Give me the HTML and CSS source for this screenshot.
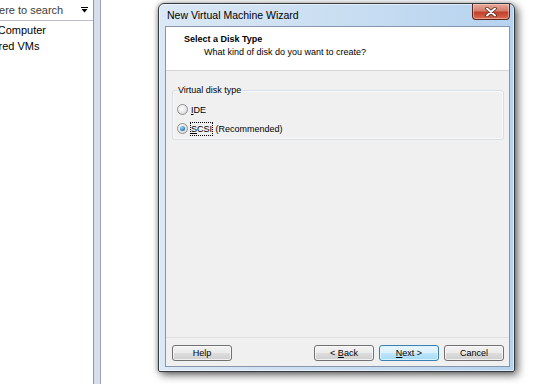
FILE: index.html
```html
<!DOCTYPE html>
<html lang="en">
<head>
  <meta charset="UTF-8" />
  <title>New Virtual Machine Wizard</title>
  <link rel="stylesheet" href="styles.css">
</head>
<body>
<div class="desktop">
  <aside class="sidebar">
    <div class="search">
      <span class="search-text">Type here to search</span>
      <svg class="search-arrow" width="7" height="6" viewBox="0 0 7 6"><path d="M0 0.5H7" stroke="#000"/><path d="M0.5 2H6.5L3.5 5.5Z" fill="#000"/></svg>
    </div>
    <ul class="tree">
      <li class="tree-item computer">My Computer</li>
      <li class="tree-item shared">Shared VMs</li>
    </ul>
  </aside>
  <div class="splitter"></div>
  <main class="workspace">
    <div class="window">
      <div class="titlebar">
        <span class="title">New Virtual Machine Wizard</span>
        <button class="close" title="Close">
          <svg width="12" height="10" viewBox="0 0 12 10">
            <path d="M2 1.5L10 8.5M10 1.5L2 8.5" stroke="#4a1d16" stroke-width="3.4" stroke-linecap="round"/>
            <path d="M2 1.5L10 8.5M10 1.5L2 8.5" stroke="#fff" stroke-width="2" stroke-linecap="round"/>
          </svg>
        </button>
      </div>
      <div class="client">
        <div class="header">
          <div class="header-title">Select a Disk Type</div>
          <div class="header-sub">What kind of disk do you want to create?</div>
        </div>
        <div class="content">
          <fieldset class="group">
            <legend>Virtual disk type</legend>
            <label class="radio"><span class="radio-dot"></span><span class="radio-text"><u>I</u>DE</span></label>
            <label class="radio"><span class="radio-dot checked"></span><span class="radio-text focus"><u>S</u>CSI</span>&nbsp;(Recommended)</label>
          </fieldset>
        </div>
        <div class="footer">
          <button class="btn btn-help">Help</button>
          <button class="btn">&lt; <u>B</u>ack</button>
          <button class="btn btn-default"><u>N</u>ext &gt;</button>
          <button class="btn">Cancel</button>
        </div>
      </div>
    </div>
  </main>
</div>
</body>
</html>
```

FILE: styles.css
```css
* { margin: 0; padding: 0; box-sizing: border-box; }
body {
  width: 558px;
  height: 384px;
  overflow: hidden;
  background: #fff;
  font-family: "Liberation Sans", Arial, sans-serif;
  color: #000;
}
.desktop { display: flex; height: 384px; }

/* left library pane, scrolled a bit to the right */
.sidebar {
  width: 93px;
  flex: none;
  overflow: hidden;
  font-size: 11px;
  white-space: nowrap;
}
.search {
  height: 21px;
  border-bottom: 1px solid #b9c0cb;
  display: flex;
  align-items: center;
  justify-content: space-between;
  padding-right: 5px;
}
.search-text { margin-left: -34px; color: #3c3c3c; }
.search-arrow { flex: none; }
.tree { list-style: none; padding-top: 1px; }
.tree-item { height: 16px; line-height: 16px; }
.tree-item.computer { margin-left: -20px; }
.tree-item.shared { margin-left: -21px; }

.splitter {
  width: 8px;
  flex: none;
  background: #d6ddef;
  border-left: 1px solid #8f96a3;
  border-right: 1px solid #9ba2ae;
}

.workspace { flex: 1; padding: 3px 0 0 57px; }

/* wizard window */
.window {
  width: 357px;
  height: 369px;
  display: flex;
  flex-direction: column;
  padding: 0 4px 4px 6px;
  border: 1px solid #363b42;
  border-radius: 6px 6px 2px 2px;
  background: linear-gradient(to right, #dbe8f5, #c6dcf1 60%, #b5d2ef);
  box-shadow: inset 0 0 0 1px rgba(255,255,255,0.55), 3px 3px 8px rgba(0,0,0,0.6), -1px 0 4px rgba(0,0,0,0.25);
}
.titlebar {
  height: 22px;
  flex: none;
  display: flex;
  justify-content: space-between;
  align-items: flex-start;
}
.title { font-size: 10.5px; line-height: 22px; padding-left: 2px; color: #000; }
.close {
  width: 38px;
  height: 16px;
  border: 1px solid #5b2219;
  border-top: none;
  border-radius: 0 0 4px 4px;
  background: linear-gradient(to bottom, #e9a99b, #d47f6e 45%, #c0402c 55%, #d86a4f);
  box-shadow: inset 0 0 0 1px rgba(255,220,210,0.5);
  display: flex;
  align-items: center;
  justify-content: center;
}

.client {
  flex: 1;
  display: flex;
  flex-direction: column;
  border: 1px solid #8596ad;
  background: #f0f0f0;
  font-size: 9px;
}
.header {
  height: 44px;
  flex: none;
  background: #fff;
  border-bottom: 1px solid #d5d5d5;
  padding: 6px 0 0 18px;
}
.header-title { font-weight: bold; line-height: 12px; }
.header-sub { line-height: 12px; margin-top: 1px; padding-left: 20px; }

.content { flex: 1; padding: 13px 5px 0 6px; }
.group {
  border: 1px solid #d5dfe5;
  border-radius: 3px;
  padding: 0 0 1px 4px;
  box-shadow: 0 0 0 1px rgba(255,255,255,0.6) inset;
}
.group legend { line-height: 12px; padding: 0 1px; }
.group > legend + .radio { margin-top: 4px; }
.radio { display: flex; align-items: center; height: 19px; }
.radio-dot {
  width: 11px;
  height: 11px;
  border-radius: 50%;
  border: 1px solid #8e8f8f;
  background: radial-gradient(circle at 40% 35%, #fff, #e4e4e4 60%, #cfcfcf);
  margin-right: 2px;
  display: flex;
  align-items: center;
  justify-content: center;
}
.radio-dot.checked::after {
  content: "";
  width: 5px;
  height: 5px;
  border-radius: 50%;
  background: radial-gradient(circle at 40% 35%, #a8e0fb, #2a7dc0 60%, #15508a);
}
.radio-text { padding: 1px 0; line-height: 10px; border: 1px solid transparent; }
.radio-text.focus { border: 1px dotted #000; }

.footer {
  height: 29px;
  flex: none;
  border-top: 1px solid #dfdfdf;
  display: flex;
  gap: 5px;
  padding: 7px 5px 0 6px;
}
.btn {
  width: 60px;
  height: 16px;
  font: inherit;
  border: 1px solid #707070;
  border-radius: 3px;
  background: linear-gradient(to bottom, #f2f2f2, #ebebeb 50%, #dddddd 50%, #cfcfcf);
  box-shadow: inset 0 0 0 1px rgba(255,255,255,0.7);
  color: #000;
}
.btn-help { margin-right: auto; }
.btn-default {
  border-color: #3c7fb1;
  background: linear-gradient(to bottom, #eaf6fd, #d9f0fc 50%, #bee6fd 50%, #a7d9f5);
  box-shadow: inset 0 0 0 1px rgba(220,245,255,0.9);
}
```
